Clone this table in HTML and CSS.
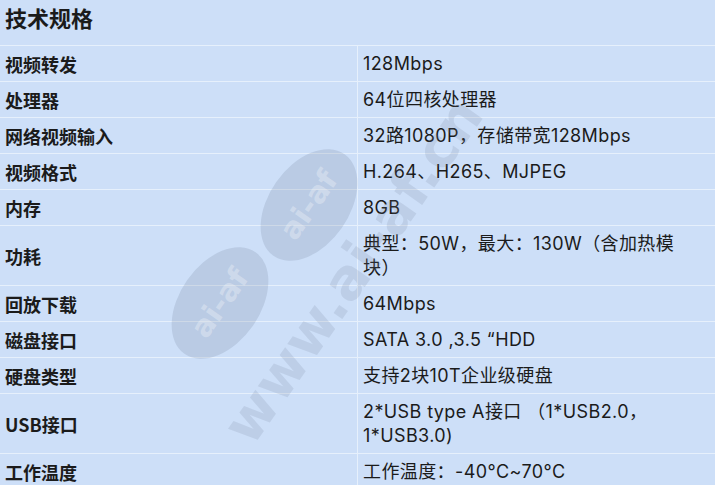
FILE: index.html
```html
<!DOCTYPE html>
<html lang="zh-CN">
<head>
<meta charset="utf-8">
<title>技术规格</title>
<link rel="stylesheet" href="styles.css">
</head>
<body>
<div class="spec">
  <div class="title">技术规格</div>
  <div class="grid">
    <div class="k">视频转发</div><div class="v">128Mbps</div>
    <div class="k">处理器</div><div class="v">64位四核处理器</div>
    <div class="k">网络视频输入</div><div class="v">32路1080P，存储带宽128Mbps</div>
    <div class="k">视频格式</div><div class="v">H.264、H265、MJPEG</div>
    <div class="k">内存</div><div class="v">8GB</div>
    <div class="k">功耗</div><div class="v">典型：50W，最大：130W（含加热模块）</div>
    <div class="k">回放下载</div><div class="v">64Mbps</div>
    <div class="k">磁盘接口</div><div class="v">SATA 3.0 ,3.5 “HDD</div>
    <div class="k">硬盘类型</div><div class="v">支持2块10T企业级硬盘</div>
    <div class="k">USB接口</div><div class="v">2*USB type A接口 （1*USB2.0，1*USB3.0)</div>
    <div class="k">工作温度</div><div class="v">工作温度：-40°C~70°C</div>
  </div>
  <svg class="watermark" width="715" height="485" viewBox="0 0 715 485" aria-hidden="true">
    <g class="wm-badge" transform="translate(220 303) rotate(-55)">
      <ellipse rx="62" ry="40"></ellipse>
      <text y="10" text-anchor="middle">ai-af</text>
    </g>
    <g class="wm-badge" transform="translate(309 205) rotate(-55)">
      <ellipse rx="62" ry="40"></ellipse>
      <text y="10" text-anchor="middle">ai-af</text>
    </g>
    <text class="wm-url" transform="translate(252 448) rotate(-55)">www.ai-af.cn</text>
  </svg>
</div>
</body>
</html>
```
FILE: styles.css
```css
html, body {
  margin: 0;
  padding: 0;
}

body {
  background: #cddff8;
  color: #1b1b1b;
  font-family: "Inter", "Noto Sans CJK SC", sans-serif;
}

.spec {
  position: relative;
  width: 715px;
  overflow: hidden;
}

.title {
  font-family: "Noto Sans CJK SC", sans-serif;
  font-size: 22px;
  font-weight: 700;
  line-height: 30px;
  padding: 2px 5px 13px;
}

.grid {
  display: grid;
  grid-template-columns: 357px 1fr;
  gap: 1px;
  background: #e6f0fc;
  border-top: 1px solid #e6f0fc;
}

.k,
.v {
  background: #cddff8;
  font-size: 18px;
  line-height: 24px;
  padding: 6px 5px 5px;
}

.k {
  font-family: "Noto Sans CJK SC", sans-serif;
  font-weight: 700;
  display: flex;
  align-items: center;
}

.v {
  padding-right: 32px;
  letter-spacing: 0.4px;
}

.watermark {
  position: absolute;
  left: 0;
  top: 0;
  pointer-events: none;
}

.wm-badge ellipse {
  fill: rgba(110, 125, 150, 0.2);
}

.wm-badge text {
  fill: rgba(255, 255, 255, 0.3);
  font-family: "DejaVu Sans", sans-serif;
  font-weight: 700;
  font-size: 30px;
}

.wm-url {
  fill: rgba(110, 125, 150, 0.17);
  font-family: "DejaVu Sans", sans-serif;
  font-weight: 700;
  font-size: 56px;
}
```
